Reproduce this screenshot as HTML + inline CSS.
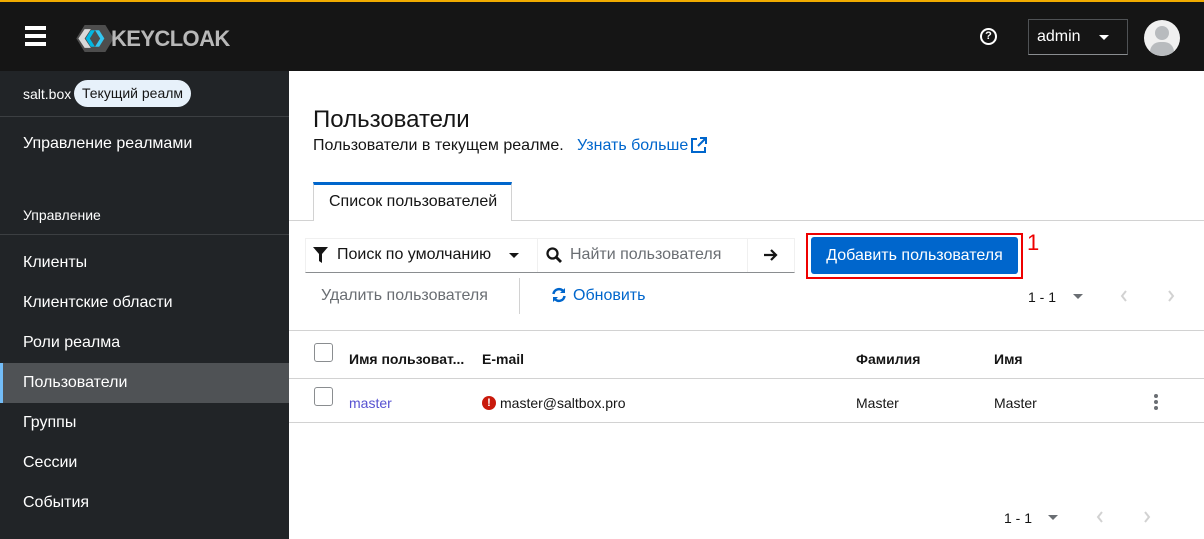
<!DOCTYPE html>
<html><head><meta charset="utf-8"><style>
*{box-sizing:border-box;margin:0;padding:0}
body{width:1204px;height:539px;overflow:hidden;font-family:"Liberation Sans",sans-serif;background:#fff;position:relative;color:#151515}
.hdr{position:absolute;left:0;top:0;width:1204px;height:71px;background:#151515;border-top:2px solid #f0ab00}
.side{position:absolute;left:0;top:71px;width:289px;height:468px;background:#212427;color:#fff}
.a{position:absolute;white-space:nowrap}
.nav{position:absolute;left:0;width:289px;height:40px;line-height:40px;padding-left:23px;font-size:16px}
</style></head><body>
<div class="hdr">
 <div class="a" style="left:25px;top:24px;width:21px;height:4px;background:#fff;box-shadow:0 8px 0 #fff,0 16px 0 #fff"></div>
 <svg class="a" style="left:76px;top:23px" width="38" height="27" viewBox="0 0 36 26"><polygon points="8,0 28,0 36,13 28,26 8,26 0,13" fill="#4d4d4d"/><polygon points="2,13 8,4 14,4 8,13 14,22 8,22" fill="#d9d9d9"/><polygon points="9,13 14,5 18,5 13,13 18,21 14,21" fill="#00b8e3"/><polygon points="27,13 22,5 18,5 23,13 18,21 22,21" fill="#33c6f0"/></svg>
 <div class="a" style="left:111px;top:24px;font-size:22px;font-weight:bold;color:#b8b8b8;letter-spacing:-0.6px">KEYCLOAK</div>
 <div class="a" style="left:980px;top:26px;width:17px;height:17px;border:2px solid #fff;border-radius:50%;color:#fff;font-size:11px;font-weight:bold;text-align:center;line-height:13px">?</div>
 <div class="a" style="left:1028px;top:17px;width:100px;height:36px;border:1px solid #4f5255;border-bottom-color:#8a8d90"></div>
 <div class="a" style="left:1037px;top:26px;color:#fff;font-size:16px">admin</div>
 <div class="a" style="left:1099px;top:33px;border:5px solid transparent;border-top:5px solid #fff;border-width:5px 5px 0"></div>
 <div class="a" style="left:1144px;top:18px;width:36px;height:36px;border-radius:50%;background:#f0f0f0;overflow:hidden"><div class="a" style="left:11px;top:6px;width:14px;height:14px;border-radius:50%;background:#b8bbbe"></div><div class="a" style="left:6px;top:22px;width:24px;height:16px;border-radius:10px 10px 0 0;background:#b8bbbe"></div></div>
</div>
<div class="side">
 <div class="a" style="left:23px;top:15px;font-size:14px">salt.box</div>
 <div class="a" style="left:74px;top:9px;height:27px;padding:0 8px;line-height:27px;background:#e7f1fa;color:#151515;border-radius:14px;font-size:14px">Текущий реалм</div>
 <div class="a" style="left:0;top:45px;width:289px;height:1px;background:#3c3f42"></div>
 <div class="a" style="left:23px;top:64px;font-size:16px">Управление реалмами</div>
 <div class="a" style="left:23px;top:136px;font-size:14px">Управление</div>
 <div class="a" style="left:0;top:163px;width:289px;height:1px;background:#3c3f42"></div>
 <div class="nav" style="top:172px">Клиенты</div>
 <div class="nav" style="top:212px">Клиентские области</div>
 <div class="nav" style="top:252px">Роли реалма</div>
 <div class="nav" style="top:292px;background:#4f5255;border-left:3px solid #73bcf7;padding-left:20px">Пользователи</div>
 <div class="nav" style="top:332px">Группы</div>
 <div class="nav" style="top:372px">Сессии</div>
 <div class="nav" style="top:412px">События</div>
</div>
<div class="a" style="left:313px;top:106px;font-size:24px">Пользователи</div>
<div class="a" style="left:313px;top:137px;font-size:16px">Пользователи в текущем реалме.</div>
<div class="a" style="left:577px;top:137px;font-size:16px;color:#06c">Узнать больше</div>
<svg class="a" style="left:690px;top:137px" width="17" height="17" viewBox="0 0 17 17" fill="none" stroke="#06c" stroke-width="2"><path d="M7 2H2v13h13v-5M10 1h6v6M16 1L8 9"/></svg>
<div class="a" style="left:289px;top:220px;width:915px;height:1px;background:#d2d2d2"></div>
<div class="a" style="left:313px;top:182px;width:199px;height:39px;background:#fff;border-top:3px solid #06c;border-left:1px solid #d2d2d2;border-right:1px solid #d2d2d2"></div>
<div class="a" style="left:329px;top:193px;font-size:16px">Список пользователей</div>
<div class="a" style="left:305px;top:238px;width:490px;height:35px;border:1px solid #f0f0f0;border-bottom:1px solid #8a8d90"></div>
<div class="a" style="left:537px;top:238px;width:1px;height:34px;background:#f0f0f0"></div>
<div class="a" style="left:747px;top:238px;width:1px;height:34px;background:#f0f0f0"></div>
<svg class="a" style="left:313px;top:247px" width="15" height="16" viewBox="0 0 15 16"><path d="M0 0h15L9 7v9l-3-2V7z" fill="#151515"/></svg>
<div class="a" style="left:337px;top:246px;font-size:16px">Поиск по умолчанию</div>
<div class="a" style="left:509px;top:253px;border:5px solid transparent;border-top-color:#151515;border-width:5px 5px 0"></div>
<svg class="a" style="left:546px;top:247px" width="16" height="16" viewBox="0 0 16 16"><circle cx="6.5" cy="6.5" r="5" fill="none" stroke="#151515" stroke-width="2.3"/><path d="M10 10l5 5" stroke="#151515" stroke-width="2.8"/></svg>
<div class="a" style="left:570px;top:246px;font-size:16px;color:#6a6e73">Найти пользователя</div>
<svg class="a" style="left:763px;top:248px" width="15" height="14" viewBox="0 0 15 14"><path d="M1 7h12M8 2l5 5-5 5" stroke="#151515" stroke-width="2.2" fill="none"/></svg>
<div class="a" style="left:806px;top:233px;width:217px;height:46px;border:2px solid #e00"></div>
<div class="a" style="left:811px;top:237px;width:207px;height:37px;background:#06c;border-radius:3px;color:#fff;font-size:16px;text-align:center;line-height:37px">Добавить пользователя</div>
<div class="a" style="left:1027px;top:230px;font-size:22px;color:#e00">1</div>
<div class="a" style="left:321px;top:287px;font-size:16px;color:#6a6e73">Удалить пользователя</div>
<div class="a" style="left:519px;top:278px;width:1px;height:36px;background:#d2d2d2"></div>
<svg class="a" style="left:551px;top:287px" width="16" height="16" viewBox="0 0 16 16" fill="none" stroke="#06c" stroke-width="2.5"><path d="M2.5 7A5.5 5.5 0 0 1 12.5 4.5M13.5 9A5.5 5.5 0 0 1 3.5 11.5"/><path d="M14 1v5h-5z M2 15v-5h5z" fill="#06c" stroke="none"/></svg>
<div class="a" style="left:573px;top:287px;font-size:16px;color:#06c">Обновить</div>
<div class="a" style="left:1028px;top:289px;font-size:14px">1 - 1</div>
<div class="a" style="left:1073px;top:294px;border:5px solid transparent;border-top-color:#6a6e73;border-width:5px 5px 0"></div>
<svg class="a" style="left:1120px;top:290px" width="8" height="12" viewBox="0 0 8 12"><path d="M6 1L2 6l4 5" stroke="#d2d2d2" stroke-width="2" fill="none"/></svg>
<svg class="a" style="left:1167px;top:290px" width="8" height="12" viewBox="0 0 8 12"><path d="M2 1l4 5-4 5" stroke="#d2d2d2" stroke-width="2" fill="none"/></svg>
<div class="a" style="left:289px;top:330px;width:915px;height:1px;background:#d2d2d2"></div>
<div class="a" style="left:314px;top:343px;width:19px;height:19px;border:1px solid #8a8d90;border-radius:3px"></div>
<div class="a" style="left:349px;top:351px;font-size:14px;font-weight:bold">Имя пользоват...</div>
<div class="a" style="left:482px;top:351px;font-size:14px;font-weight:bold">E-mail</div>
<div class="a" style="left:856px;top:351px;font-size:14px;font-weight:bold">Фамилия</div>
<div class="a" style="left:994px;top:351px;font-size:14px;font-weight:bold">Имя</div>
<div class="a" style="left:289px;top:378px;width:915px;height:1px;background:#d2d2d2"></div>
<div class="a" style="left:314px;top:387px;width:19px;height:19px;border:1px solid #8a8d90;border-radius:3px"></div>
<div class="a" style="left:349px;top:395px;font-size:14px;color:#5752d1">master</div>
<div class="a" style="left:482px;top:396px;width:14px;height:14px;border-radius:50%;background:#c9190b;color:#fff;font-size:11px;font-weight:bold;text-align:center;line-height:14px">!</div>
<div class="a" style="left:500px;top:395px;font-size:14px">master@saltbox.pro</div>
<div class="a" style="left:856px;top:395px;font-size:14px">Master</div>
<div class="a" style="left:994px;top:395px;font-size:14px">Master</div>
<div class="a" style="left:1154px;top:394px;width:4px;height:4px;border-radius:50%;background:#6a6e73;box-shadow:0 6px 0 #6a6e73,0 12px 0 #6a6e73"></div>
<div class="a" style="left:289px;top:422px;width:915px;height:1px;background:#d2d2d2"></div>
<div class="a" style="left:1004px;top:510px;font-size:14px">1 - 1</div>
<div class="a" style="left:1048px;top:515px;border:5px solid transparent;border-top-color:#6a6e73;border-width:5px 5px 0"></div>
<svg class="a" style="left:1096px;top:511px" width="8" height="12" viewBox="0 0 8 12"><path d="M6 1L2 6l4 5" stroke="#d2d2d2" stroke-width="2" fill="none"/></svg>
<svg class="a" style="left:1143px;top:511px" width="8" height="12" viewBox="0 0 8 12"><path d="M2 1l4 5-4 5" stroke="#d2d2d2" stroke-width="2" fill="none"/></svg>
</body></html>
